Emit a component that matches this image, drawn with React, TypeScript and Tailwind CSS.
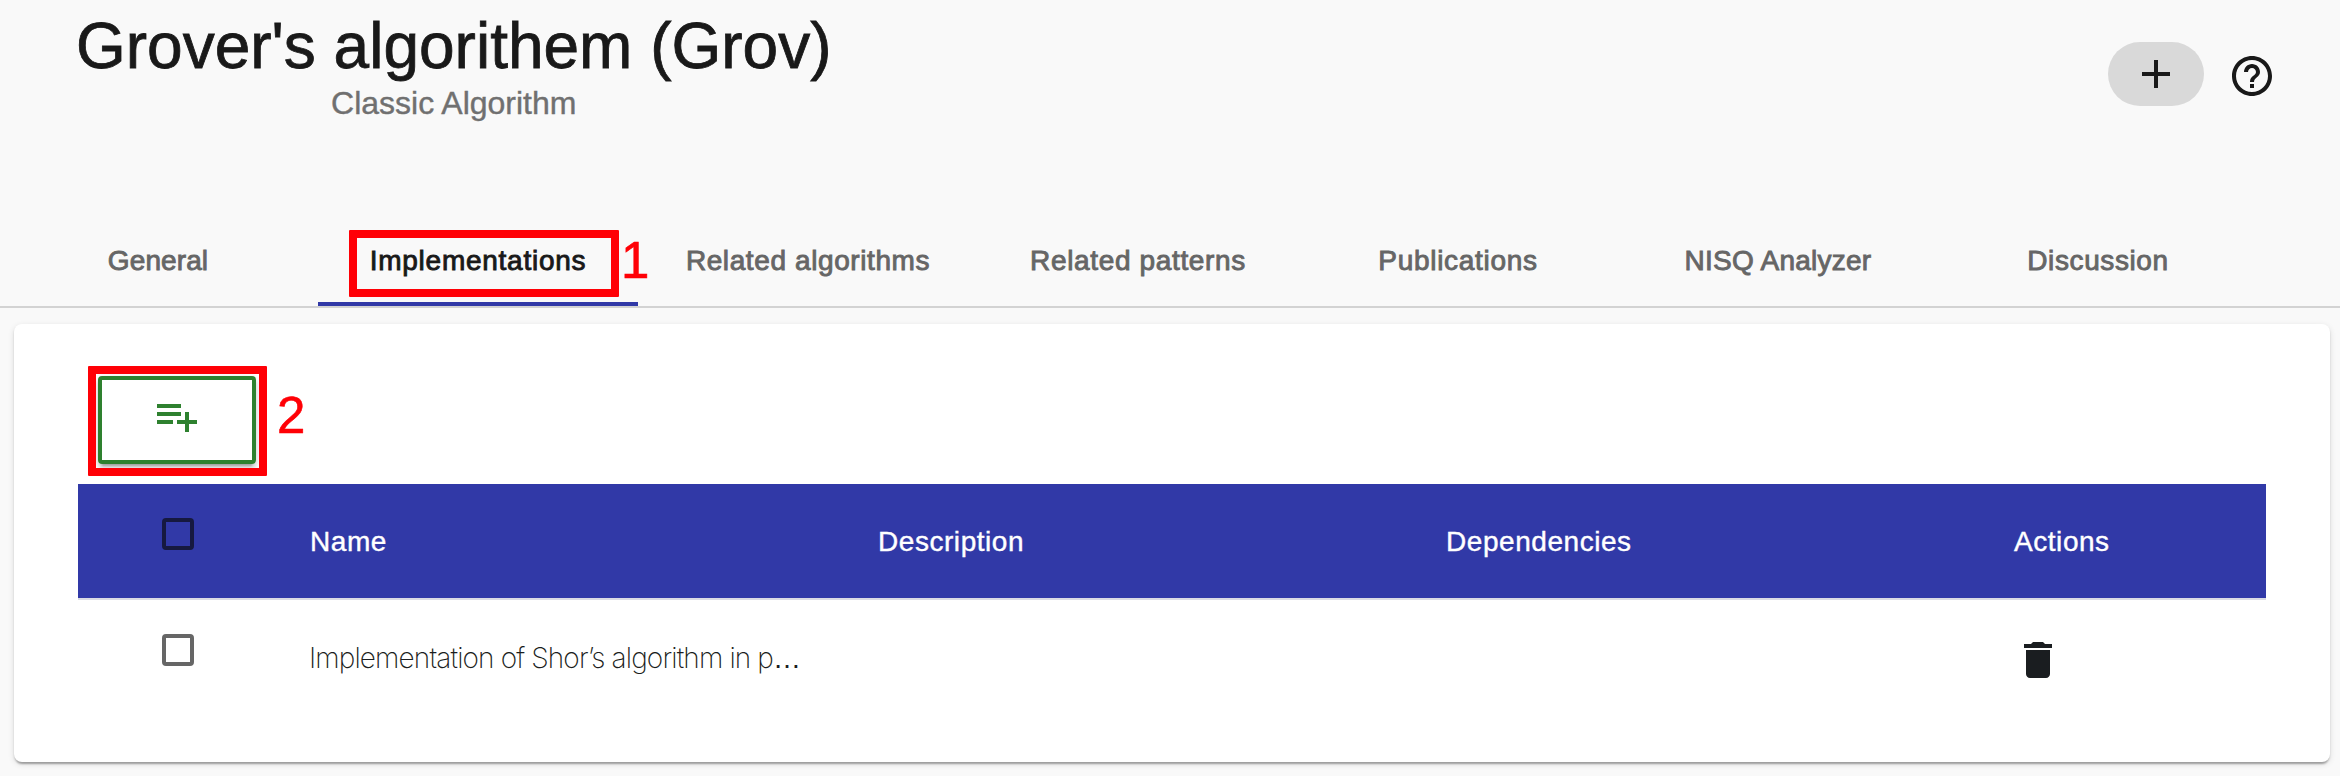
import React from "react";

type IconProps = { d: string; className?: string };

const Icon = ({ d, className = "" }: IconProps) => (
  <svg viewBox="0 0 24 24" className={`block size-12 shrink-0 fill-current ${className}`} aria-hidden="true">
    <path d={d} />
  </svg>
);

const ADD = "M19 13h-6v6h-2v-6H5v-2h6V5h2v6h6v2z";
const HELP =
  "M11 18h2v-2h-2v2zm1-16C6.48 2 2 6.48 2 12s4.48 10 10 10 10-4.48 10-10S17.52 2 12 2zm0 18c-4.41 0-8-3.59-8-8s3.59-8 8-8 8 3.59 8 8-3.59 8-8 8zm0-14c-2.21 0-4 1.79-4 4h2c0-1.1.9-2 2-2s2 .9 2 2c0 2-3 1.75-3 5h2c0-2.25 3-2.5 3-5 0-2.21-1.79-4-4-4z";
const PLAYLIST_ADD = "M14 10H2v2h12v-2zm0-4H2v2h12V6zm4 8v-4h-2v4h-4v2h4v4h2v-4h4v-2h-4zM2 16h8v-2H2v2z";
const DELETE = "M6 19c0 1.1.9 2 2 2h8c1.1 0 2-.9 2-2V7H6v12zM19 4h-3.5l-1-1h-5l-1 1H5v2h14V4z";

const tabs = [
  { label: "General", width: "w-[320px]", spacing: "tracking-[0.1px]" },
  { label: "Implementations", width: "w-[320px]", spacing: "tracking-[0.75px]", active: true },
  { label: "Related algorithms", width: "w-[340px]", spacing: "tracking-[0.6px]" },
  { label: "Related patterns", width: "w-[320px]", spacing: "tracking-[0.65px]" },
  { label: "Publications", width: "w-[320px]", spacing: "tracking-[0.7px]" },
  { label: "NISQ Analyzer", width: "w-[320px]", spacing: "tracking-[0.25px]" },
  { label: "Discussion", width: "w-[320px]", spacing: "tracking-[0.6px]" },
];

const columns = ["Name", "Description", "Dependencies", "Actions"];

export default function App() {
  return (
    <div className="flex h-[776px] w-[2340px] flex-col overflow-hidden bg-[#f9f9f9] font-['Liberation_Sans',Arial,sans-serif] text-[#191919]">
      <header className="flex h-[210px] shrink-0 items-start justify-between pl-[76px] pr-16">
        <div className="flex flex-col items-center pt-[9px]">
          <h1 className="whitespace-nowrap text-[64px] leading-[74px] [-webkit-text-stroke:0.8px_currentColor]">
            Grover's algorithem (Grov)
          </h1>
          <p className="-mt-0.5 text-[32px] leading-[44px] text-[#707070] [-webkit-text-stroke:0.4px_currentColor]">
            Classic Algorithm
          </p>
        </div>
        <div className="flex gap-6 pt-[42px]">
          <button className="flex h-16 w-24 items-center justify-center rounded-full bg-[#d9d9d9]">
            <Icon d={ADD} />
          </button>
          <Icon d={HELP} className="mt-2.5" />
        </div>
      </header>

      <nav className="flex h-[98px] shrink-0 border-b-2 border-[#d3d3d3]">
        {tabs.map((tab, i) => (
          <div
            key={tab.label}
            className={`relative flex h-24 shrink-0 items-center justify-center whitespace-nowrap text-[28px] ${tab.width} ${i === 0 ? "-ml-0.5" : ""} ${
              tab.active ? "border-b-4 border-[#3139a7] pt-1 text-[#191919]" : "text-[#666666]"
            }`}
          >
            <span className={`pt-1.5 leading-8 [-webkit-text-stroke:0.9px_currentColor] ${tab.spacing}`}>{tab.label}</span>
            {tab.active && (
              <>
                <div className="absolute left-[31px] top-5 h-[67px] w-[270px] rounded-[1px] border-8 border-[#ff0006]" />
                <span className="absolute left-[303px] top-[22px] text-[51px] leading-[58px] text-[#ff0006] [-webkit-text-stroke:0.6px_currentColor]">
                  1
                </span>
              </>
            )}
          </div>
        ))}
      </nav>

      <main className="ml-3.5 mt-4 h-[438px] w-[2316px] shrink-0 rounded-lg bg-white pl-16 pr-16 pt-[52px] shadow-[0_4px_2px_-2px_rgba(0,0,0,0.2),0_2px_2px_0_rgba(0,0,0,0.14),0_2px_6px_0_rgba(0,0,0,0.12)]">
        <div className="h-[108px] pl-5">
          <button className="relative flex h-[88px] w-[158px] items-center justify-center rounded-[4px] border-4 border-[#2e812f] pb-2 text-[#2e812f] shadow-[0_6px_2px_-4px_rgba(0,0,0,0.2),0_4px_4px_0_rgba(0,0,0,0.14),0_2px_10px_0_rgba(0,0,0,0.12)]">
            <Icon d={PLAYLIST_ADD} />
            <div className="absolute -left-3.5 -top-3.5 h-[110px] w-[179px] rounded-[1px] border-8 border-[#ff0006]" />
            <span className="absolute left-[175px] top-[7px] text-[51px] leading-[58px] text-[#ff0006] [-webkit-text-stroke:0.6px_currentColor]">
              2
            </span>
          </button>
        </div>

        <div className="w-[2188px]">
          <div className="flex h-[116px] border-b-2 border-[#dadbe4] bg-[#3139a7] bg-clip-padding text-white">
            <div className="w-[232px] pl-[84px] pt-[34px]">
              <div className="size-8 rounded-[4px] border-4 border-[#161940]" />
            </div>
            {columns.map((name, i) => (
              <div
                key={name}
                className={`pt-[42px] text-[28px] leading-8 tracking-[0.55px] [-webkit-text-stroke:0.4px_currentColor] ${i < 3 ? "w-[568px]" : ""}`}
              >
                {name}
              </div>
            ))}
          </div>
          <div className="flex h-[116px]">
            <div className="w-[232px] pl-[84px] pt-[34px]">
              <div className="size-8 rounded-[4px] border-4 border-[#666666]" />
            </div>
            <div className="w-[1704px] pt-[42px] font-[Inter,sans-serif] text-[28px] font-extralight leading-8 tracking-[-0.87px] text-[#1a1d20]">
              <span className="-ml-px">Implementation of Shor’s algorithm in p</span>
              <span className="font-['Liberation_Sans',sans-serif] tracking-normal">…</span>
            </div>
            <Icon d={DELETE} className="mt-9 text-[#1a1d20]" />
          </div>
        </div>
      </main>
    </div>
  );
}
